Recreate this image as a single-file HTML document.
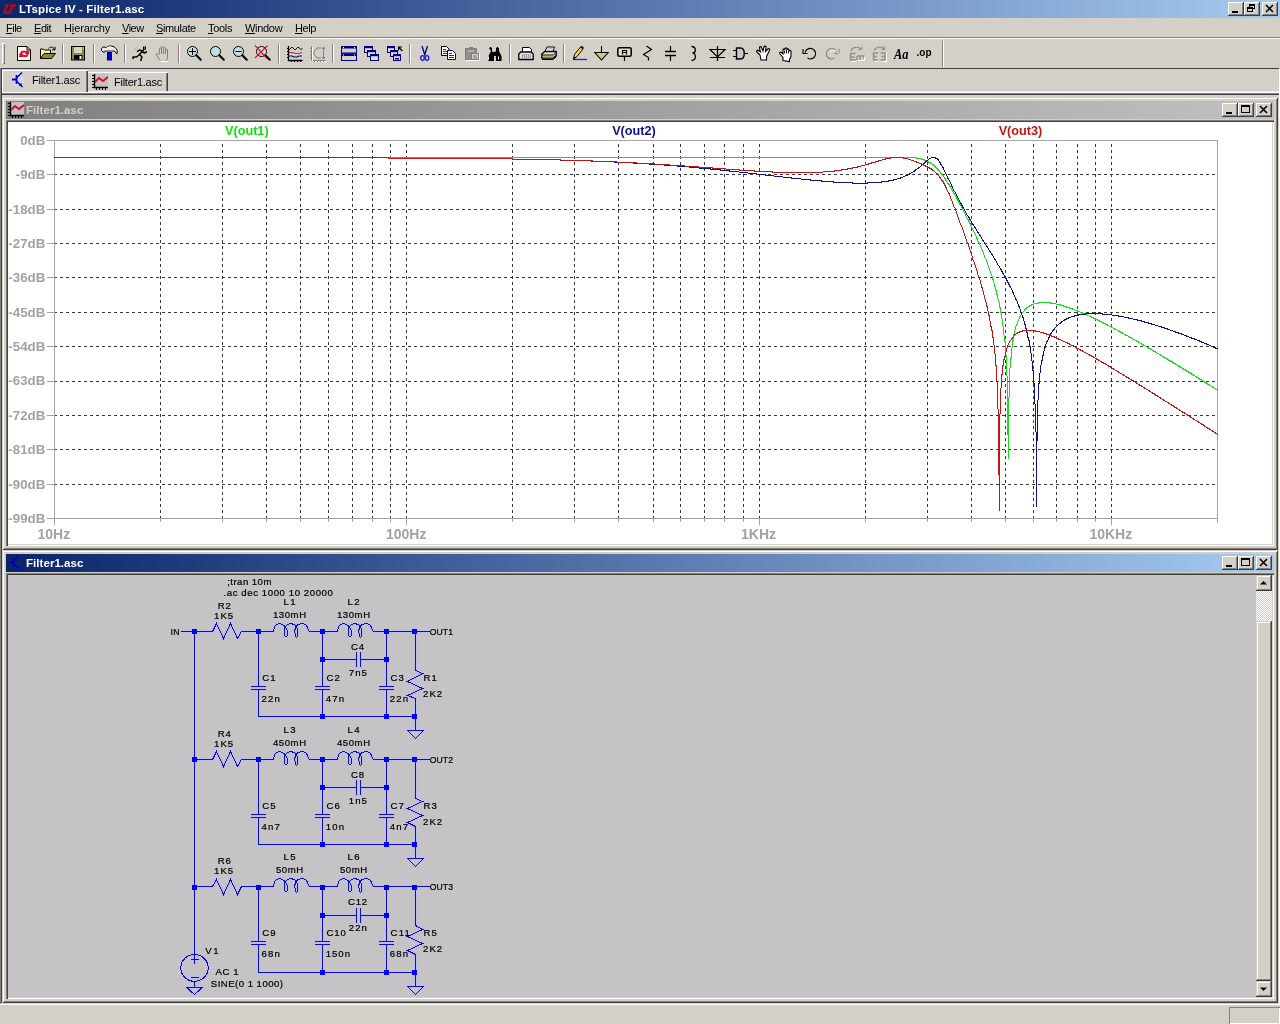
<!DOCTYPE html>
<html lang="en"><head><meta charset="utf-8"><title>LTspice IV - Filter1.asc</title>
<style>
html,body{margin:0;padding:0}
body{width:1280px;height:1024px;position:relative;overflow:hidden;background:#d4d0c8;font-family:"Liberation Sans",sans-serif;font-size:11px;color:#000}
div,span,svg{position:absolute;box-sizing:border-box}
svg,span{will-change:transform}
.hl{background:#fff}.sh{background:#808080}.dk{background:#404040}
#title{left:0;top:0;width:1280px;height:18px;background:linear-gradient(90deg,#0a246a 0%,#a6caf0 100%)}
#title .cap{left:19px;top:2px;color:#fff;font-weight:bold;font-size:11.5px;white-space:nowrap;letter-spacing:.1px;line-height:14px}
.btn{width:16px;height:14px;background:#d4d0c8;box-shadow:inset -1px -1px 0 #404040,inset 1px 1px 0 #fff,inset -2px -2px 0 #808080}
.btn svg{left:0;top:0}
#menu{left:0;top:18px;width:1280px;height:19px}
#menu span{top:4px;white-space:nowrap;line-height:13px;font-size:11px}
#menu u{text-decoration:underline;text-underline-offset:1px}
#tool{left:0;top:39px;width:1280px;height:29px}
.grip{left:2px;top:4px;width:3px;height:21px;box-shadow:inset 1px 1px 0 #fff,inset -1px -1px 0 #808080}
.sep{top:5px;width:2px;height:19px;border-left:1px solid #808080;border-right:1px solid #fff}
.ic{top:7px;width:16px;height:16px;overflow:visible}
#tabs{left:0;top:69px;width:1280px;height:24px}
.tab{white-space:nowrap;font-size:11px;line-height:13px}
.child{left:2px;width:1276px;background:#d4d0c8;box-shadow:inset 1px 1px 0 #d4d0c8,inset -1px -1px 0 #404040,inset 2px 2px 0 #fff,inset -2px -2px 0 #808080}
.ctitle{left:4px;top:4px;width:1268px;height:18px}
.ctitle .cap{left:19.5px;top:2px;font-weight:bold;font-size:11.5px;white-space:nowrap;line-height:14px;letter-spacing:.05px}
.client{left:4px;top:23px;width:1268px;box-shadow:inset 1px 1px 0 #808080,inset 2px 2px 0 #404040,inset -1px -1px 0 #fff,inset -2px -2px 0 #d4d0c8}
.client svg.plot,.client svg.sch{left:2px;top:2px}
.sbtn{width:16px;height:16px;background:#d4d0c8;box-shadow:inset -1px -1px 0 #404040,inset 1px 1px 0 #d4d0c8,inset -2px -2px 0 #808080,inset 2px 2px 0 #fff}
#status{left:0;top:1003px;width:1280px;height:21px}
</style></head><body>
<div id="title"><svg width="16" height="16" viewBox="0 0 16 16" style="left:2px;top:1px"><path d="M3.500 3h3.500l-2.500 7h3.500l-1 3h-6.500zM8 3h6.500l-1 3h-2l-2.500 7h-3l2.500-7h-1.500z" fill="#98102a"/></svg><span class="cap">LTspice IV - Filter1.asc</span>
<div class="btn" style="left:1228px;top:2px"><svg width="16" height="14" viewBox="0 0 16 14"><rect x="4" y="9" width="6" height="2" fill="#000"/></svg></div><div class="btn" style="left:1244px;top:2px"><svg width="16" height="14" viewBox="0 0 16 14"><rect x="5.500" y="2.500" width="5" height="4" fill="none" stroke="#000"/><rect x="5" y="2" width="6" height="2" fill="#000"/><rect x="3.500" y="5.500" width="5" height="4" fill="#d4d0c8" stroke="#000"/><rect x="3" y="5" width="6" height="2" fill="#000"/></svg></div><div class="btn" style="left:1262px;top:2px"><svg width="16" height="14" viewBox="0 0 16 14"><path d="M4 3l7 7M11 3l-7 7" stroke="#000" stroke-width="1.600" fill="none"/></svg></div>
</div>
<div id="menu">
<span style="left:5.5px;letter-spacing:-0.5px"><u>F</u>ile</span>
<span style="left:33.5px;letter-spacing:-0.44px"><u>E</u>dit</span>
<span style="left:63.5px;letter-spacing:-0.1px">H<u>i</u>erarchy</span>
<span style="left:121.7px;letter-spacing:-0.5px"><u>V</u>iew</span>
<span style="left:155.5px;letter-spacing:-0.37px"><u>S</u>imulate</span>
<span style="left:208px;letter-spacing:-0.3px"><u>T</u>ools</span>
<span style="left:245px;letter-spacing:-0.3px"><u>W</u>indow</span>
<span style="left:294.5px;letter-spacing:-0.44px"><u>H</u>elp</span>
</div>
<div class="sh" style="left:0;top:37px;width:1280px;height:1px"></div><div class="hl" style="left:0;top:38px;width:1280px;height:1px"></div>
<div id="tool"><div class="grip"></div>
<div class="sep" style="left:62px"></div>
<div class="sep" style="left:93px"></div>
<div class="sep" style="left:124px"></div>
<div class="sep" style="left:178px"></div>
<div class="sep" style="left:278px"></div>
<div class="sep" style="left:332px"></div>
<div class="sep" style="left:409px"></div>
<div class="sep" style="left:509px"></div>
<div class="sep" style="left:563px"></div>
<svg class="ic" style="left:17px" width="16" height="16" viewBox="0 0 16 16"><path d="M.500 .5h9.500l3.500 3.500v10.500h-13z" fill="#fff" stroke="#000"/><path d="M10 .5v3.500h3.500" fill="none" stroke="#000"/><path d="M4.500 4.800h8.500l-2.500 3.200h-2.800l1-1.300h-3l-2 2.500h-2zM10 11h-8.500l2.500-3.200h2.800l-1 1.300h3l2-2.500h2z" fill="#e01028"/></svg>
<svg class="ic" style="left:40px" width="16" height="16" viewBox="0 0 16 16"><path d="M.500 12.500v-9.500h3l1 1h6v3.500" fill="#f8f0a0" stroke="#000"/><path d="M.500 12.500l3.500-5h11.500l-4 5z" fill="#8c8c28" stroke="#000"/><path d="M8.500 2.500c1.500-2 4.500-2 6 .8M15 .8v3h-3" fill="none" stroke="#000"/></svg>
<svg class="ic" style="left:71px" width="16" height="16" viewBox="0 0 16 16"><rect x=".5" y=".5" width="13" height="13.500" fill="#8c8c30" stroke="#000"/><rect x="3" y="1" width="8" height="6" fill="#d4d4cc"/><rect x="3" y="9" width="8.500" height="4.500" fill="#000"/><rect x="8.500" y="10" width="2" height="3" fill="#fff"/><rect x="12" y="1.500" width="1" height="1" fill="#fff"/></svg>
<svg class="ic" style="left:101px" width="16" height="16" viewBox="0 0 16 16"><path d="M.500 2.500l1.500-1.500h2l1 1c1-1.500 3-2 5-2c3 0 5 2 6.200 4.500v2.800l-1 .2c-.5-2-1.500-2.500-3-2.500h-7.200l-1 1h-2l-1.500-1.500z" fill="#e8e8e8" stroke="#000"/><path d="M5.500 2c2-1 4.500-1 6.500 0" stroke="#fff" stroke-width="1.300" fill="none"/><path d="M3 4.800h8.500" stroke="#a0a0a0" stroke-width="1" fill="none"/><rect x="6.500" y="6.500" width="4" height="7.500" fill="#0000c8" stroke="#000080"/></svg>
<svg class="ic" style="left:132px" width="16" height="16" viewBox="0 0 16 16"><g fill="none" stroke="#000" stroke-width="1.500" stroke-linecap="round" stroke-linejoin="round"><path d="M12 3.500l-5 5.500M10.500 5l-3-1l-2 1.500M10 5.500l2.500 1.500l2-1.200M7 9l-2.500 2h-3.500v1.500M7.500 8.500l2.500 2.500l-1 2.500v1"/></g><rect x="11" y=".5" width="3" height="3" fill="#000"/><rect x="12" y="1.500" width="1" height="1" fill="#fff"/><path d="M3 3l2-1.500M4.500 4.500l1.500-1" stroke="#a0a0a0" stroke-width=".8" fill="none"/></svg>
<svg class="ic" style="left:155px" width="16" height="16" viewBox="0 0 16 16"><path d="M4.500 8v-5a1 1 0 0 1 2 0v-1.500a1 1 0 0 1 2 0v1a1 1 0 0 1 2 0v1.500a1 1 0 0 1 2 0v7c0 3-1.500 4.500-4 4.500c-3 0-4-1.500-5-3.500l-2.500-3.500c.5-1 1.500-1 2.500 0z" fill="#d4d0c8" stroke="#808080"/><path d="M6.500 3v5M8.500 2.500v5.500M10.500 4v4" stroke="#808080" fill="none"/><path d="M5 15.500h8" stroke="#fff"/></svg>
<svg class="ic" style="left:187px" width="16" height="16" viewBox="0 0 16 16"><circle cx="5.500" cy="5.500" r="5" fill="#c0e0e0" stroke="#000" stroke-width="1"/><path d="M9.300 9.300L13.800 13.800" stroke="#000" stroke-width="2" stroke-linecap="round"/><path d="M2 5.500h7M5.500 2v7" stroke="#000" stroke-width="1"/></svg>
<svg class="ic" style="left:210px" width="16" height="16" viewBox="0 0 16 16"><circle cx="5.500" cy="5.500" r="5" fill="#c0e0e0" stroke="#000" stroke-width="1"/><path d="M9.300 9.300L13.800 13.800" stroke="#000" stroke-width="2" stroke-linecap="round"/></svg>
<svg class="ic" style="left:233px" width="16" height="16" viewBox="0 0 16 16"><circle cx="5.500" cy="5.500" r="5" fill="#c0e0e0" stroke="#000" stroke-width="1"/><path d="M9.300 9.300L13.800 13.800" stroke="#000" stroke-width="2" stroke-linecap="round"/><path d="M2.500 5.500h6" stroke="#000" stroke-width="1"/></svg>
<svg class="ic" style="left:256px" width="16" height="16" viewBox="0 0 16 16"><circle cx="5.500" cy="5.500" r="5" fill="#c0e0e0" stroke="#000" stroke-width="1"/><path d="M9.300 9.300L13.800 13.800" stroke="#000" stroke-width="2" stroke-linecap="round"/><path d="M-1 -.500l12 13M11.500 -.500L-1 12" stroke="#e01020" stroke-width="1.200"/></svg>
<svg class="ic" style="left:287px" width="16" height="16" viewBox="0 0 16 16"><path d="M1.500 0v14.500h14" fill="none" stroke="#000" stroke-width="1.300"/><path d="M0 2.500h2M0 5.500h2M0 8.500h2M0 11.500h2M4.500 14v2M7.500 14v2M10.500 14v2M13.500 14v2" stroke="#000"/><path d="M2 4l3-3l3 3l3-3l3 2.500l1.500-1" fill="none" stroke="#000" stroke-width=".9"/><path d="M2 6.500h4l2 1h4l3-1" fill="none" stroke="#e02030" stroke-width="1.100"/><path d="M2 10h3l2 1h3l2-1h3" fill="none" stroke="#000080" stroke-width="1.100"/></svg>
<svg class="ic" style="left:310px" width="16" height="16" viewBox="0 0 16 16"><path d="M1.500 0v14.500h14" fill="none" stroke="#808080"/><path d="M2.500 1v14M3 15.500h13" stroke="#fff"/><path d="M0 2.500h2M0 5.500h2M0 8.500h2M0 11.500h2M4.500 14v2M7.500 14v2M10.500 14v2M13.500 14v2" stroke="#808080"/><path d="M13.500 1v12M12 3l1.500-2l1.500 2M12 11l1.500 2l1.500-2" fill="none" stroke="#808080"/><path d="M11 2h-4l-3 4v2l3 4h4" fill="none" stroke="#808080"/></svg>
<svg class="ic" style="left:341px" width="16" height="16" viewBox="0 0 16 16"><rect x=".5" y=".5" width="15" height="6.500" fill="#d4d0c8" stroke="#000080"/><rect x="0" y="0" width="16" height="2.500" fill="#000080"/><rect x=".5" y="8" width="15" height="6.500" fill="#d4d0c8" stroke="#000080"/><rect x="0" y="7.500" width="16" height="2.500" fill="#000080"/><rect x="2" y="1" width="1" height="1" fill="#fff"/><rect x="13" y="1" width="1" height="1" fill="#fff"/><rect x="2" y="8.500" width="1" height="1" fill="#fff"/><rect x="13" y="8.500" width="1" height="1" fill="#fff"/></svg>
<svg class="ic" style="left:364px" width="16" height="16" viewBox="0 0 16 16"><rect x="0.5" y="0.5" width="8" height="6" fill="#dcdce8" stroke="#000080"/><rect x="0" y="0" width="9" height="2.2" fill="#000080"/><rect x="3.5" y="4.5" width="8" height="6" fill="#dcdce8" stroke="#000080"/><rect x="3" y="4" width="9" height="2.2" fill="#000080"/><rect x="6.5" y="8.5" width="8" height="6" fill="#dcdce8" stroke="#000080"/><rect x="6" y="8" width="9" height="2.2" fill="#000080"/></svg>
<svg class="ic" style="left:387px" width="16" height="16" viewBox="0 0 16 16"><rect x="0.5" y="0.5" width="7" height="6" fill="#dcdce8" stroke="#000080"/><rect x="0" y="0" width="8" height="2.2" fill="#000080"/><rect x="3.5" y="4.5" width="7" height="6" fill="#dcdce8" stroke="#000080"/><rect x="3" y="4" width="8" height="2.2" fill="#000080"/><rect x="6.5" y="8.5" width="7" height="6" fill="#dcdce8" stroke="#000080"/><rect x="6" y="8" width="8" height="2.2" fill="#000080"/><rect x="8" y="12" width="4" height="1.500" fill="#000080"/><path d="M15.500 5l-3.500-3.500M11.500 4.500v-3.500h3.500" fill="none" stroke="#000" stroke-width="1.200"/></svg>
<svg class="ic" style="left:418px" width="16" height="16" viewBox="0 0 16 16"><path d="M4 0l3 9.500M9.500 0l-3 9.500" stroke="#000080" stroke-width="1.300" fill="none"/><ellipse cx="4.500" cy="12" rx="1.800" ry="2.400" fill="none" stroke="#1818d8" stroke-width="1.300"/><ellipse cx="9" cy="12" rx="1.800" ry="2.400" fill="none" stroke="#1818d8" stroke-width="1.300"/></svg>
<svg class="ic" style="left:441px" width="16" height="16" viewBox="0 0 16 16"><path d="M.500 .5h5l2.500 2.500v6.500h-7.500z" fill="#fff" stroke="#000"/><path d="M2 3.500h3M2 5.500h4M2 7.500h4" stroke="#000" stroke-width=".8"/><path d="M6.500 4.500h5l3 3v6h-8z" fill="#fff" stroke="#000080"/><path d="M8 7.500h3M8 9.500h5M8 11.500h5" stroke="#000" stroke-width=".8"/></svg>
<svg class="ic" style="left:464px" width="16" height="16" viewBox="0 0 16 16"><rect x="1.500" y="2.500" width="11" height="11" fill="#909090" stroke="#808080"/><rect x="5" y="1" width="4" height="2.500" fill="#808080"/><path d="M4 5h6" stroke="#d4d0c8"/><rect x="7.500" y="7.500" width="7" height="6" fill="#d4d0c8" stroke="#808080"/><path d="M9 10h4M9 12h4" stroke="#808080"/><path d="M2 14.500h13.500v-7" fill="none" stroke="#fff"/></svg>
<svg class="ic" style="left:486px" width="16" height="16" viewBox="0 0 16 16"><path d="M3 2h3v3l1 1h2l1-1v-3h3v3l2.500 5v5h-5.500v-5h-2v5h-5.500v-5l2.500-5z" fill="#000"/><rect x="3.800" y="1" width="1.500" height="1.500" fill="#000"/><rect x="10.700" y="1" width="1.500" height="1.500" fill="#000"/><path d="M2.500 10.500v3M12.500 10.500v3" stroke="#fff"/></svg>
<svg class="ic" style="left:518px" width="16" height="16" viewBox="0 0 16 16"><path d="M4.500 6v-4.500h7l2 2v2.500" fill="#fff" stroke="#000"/><path d="M.8 13.500v-5.500l2-2h10.400l2 2v5.500z" fill="#e8e8e8" stroke="#000" stroke-width="1.300"/><rect x="3" y="8" width="10" height="4.500" fill="#a0a0a0"/><path d="M3 9h10M3 11h10" stroke="#fff" stroke-dasharray="1 1"/></svg>
<svg class="ic" style="left:541px" width="16" height="16" viewBox="0 0 16 16"><path d="M4 5.500l2-4.500h7.500l-1.500 4.500" fill="#fff" stroke="#000"/><path d="M.8 12v-4l3-2.500h11.400v4l-3 2.500z" fill="#e0e0e0" stroke="#000" stroke-width="1.300"/><path d="M1 9h11.500l2.500-2.500M1 13.500h11l3-2.500v-1.500" fill="none" stroke="#000"/><path d="M2 11h10" stroke="#a0a020" stroke-width="1.500"/><path d="M6.500 3h5" stroke="#909090"/></svg>
<svg class="ic" style="left:572px" width="16" height="16" viewBox="0 0 16 16"><path d="M1 13.500h14" stroke="#2020e0" stroke-width="1.300"/><path d="M1.500 13l1-4.500l6-7.500l2.500 2l-6 7.500z" fill="#f0e020" stroke="#000"/><path d="M8.500 1l2.500 2l1-1.300l-2.500-2z" fill="#000"/><path d="M1.500 13l.6-2.600l1.800 1.400z" fill="#000"/></svg>
<svg class="ic" style="left:595px" width="16" height="16" viewBox="0 0 16 16"><path d="M6.500 0v6.500" stroke="#000" stroke-width="1.100"/><path d="M-.200 6.500h13.400l-6.700 7.500z" fill="#c8c890" stroke="#000" stroke-width="1.100"/></svg>
<svg class="ic" style="left:617px" width="16" height="16" viewBox="0 0 16 16"><rect x=".8" y="1.800" width="13.400" height="8.400" rx="1.500" fill="#e0e0c0" stroke="#000" stroke-width="1.500"/><path d="M7.500 10v5" stroke="#000" stroke-width="1.200"/><path d="M5.500 8.500v-4h4v4M5.500 6.500h4" fill="none" stroke="#000" stroke-width="1.200"/></svg>
<svg class="ic" style="left:641px" width="16" height="16" viewBox="0 0 16 16"><path d="M5.500 0l5 3.500l-8 5l5 3v3" fill="none" stroke="#000" stroke-width="1.200"/></svg>
<svg class="ic" style="left:663px" width="16" height="16" viewBox="0 0 16 16"><path d="M7.500 0v5.500M7.500 9.500v5.500" stroke="#000" stroke-width="1.200"/><path d="M2 5.500h11M2 9.500h11" stroke="#000" stroke-width="1.600"/></svg>
<svg class="ic" style="left:686px" width="16" height="16" viewBox="0 0 16 16"><path d="M5.500 .5c5 0 5 6.500 1 6.500c4 0 4 7.500-1 7.500" fill="none" stroke="#000" stroke-width="1.300"/></svg>
<svg class="ic" style="left:710px" width="16" height="16" viewBox="0 0 16 16"><path d="M7.500 0v15M0 3.500h15l-7.500 7.500zM0 11.500h15" fill="none" stroke="#000" stroke-width="1.200"/></svg>
<svg class="ic" style="left:733px" width="16" height="16" viewBox="0 0 16 16"><path d="M0 4.500h4M0 10.500h4M11 7.500h4" stroke="#000" stroke-width="1.200"/><path d="M3.500 2h4c5 0 5 11 0 11h-4z" fill="#c8c8c8" stroke="#000" stroke-width="1.400"/></svg>
<svg class="ic" style="left:756px" width="16" height="16" viewBox="0 0 16 16"><path d="M4 9l-3-3c-1-1 .5-2.500 1.500-1.500l2 1.500l-1-4c-.3-1.500 1.500-2 2-.5l1.500 3.500l1-4c.4-1.500 2.300-1 2 .5l-.5 4l2.500-2.500c1-1 2.500 0 1.500 1.500l-3 6v3.500h-5.500z" fill="#fff" stroke="#000" stroke-width="1.100"/></svg>
<svg class="ic" style="left:779px" width="16" height="16" viewBox="0 0 16 16"><path d="M4 14.500v-3l-3-3.500c-1-1.500 .5-2.500 1.500-1.500l1.500 1.500v-4c0-1.500 2-1.500 2 0v-1c0-1.500 2-1.500 2 0v1c0-1.500 2-1.500 2 0v1.500c0-1.500 2-1.500 2 0v5l-1.500 3v2z" fill="#fff" stroke="#000" stroke-width="1.100"/><path d="M5.500 4.500v3M7.500 4v3.500M9.500 4.500v3" stroke="#000" stroke-width=".9" fill="none"/></svg>
<svg class="ic" style="left:802px" width="16" height="16" viewBox="0 0 16 16"><path d="M3 6.500c1-4 6-5.500 9-2.500c3 3 1.500 8.500-3 9c-1.500 .2-2.500-.3-3.500-1" fill="none" stroke="#000" stroke-width="1.100"/><path d="M1 3v4.500h4.500" fill="none" stroke="#000" stroke-width="1.100"/></svg>
<svg class="ic" style="left:825px" width="16" height="16" viewBox="0 0 16 16"><path d="M12 6.500c-1-4-6-5.500-9-2.500c-3 3-1.500 8.500 3 9c1.500 .2 2.500-.3 3.500-1" fill="none" stroke="#909090" stroke-width="1.300"/><path d="M14 3v4.500h-4.500" fill="none" stroke="#909090" stroke-width="1.300"/><path d="M13 7.500c-1-4-6-5.500-9-2.500" fill="none" stroke="#fff" stroke-width=".8" transform="translate(1 1)"/></svg>
<svg class="ic" style="left:848px" width="16" height="16" viewBox="0 0 16 16"><path d="M2.500 7v7.500M2.500 7.500h5M2.500 11h4M2.500 14h5.500" fill="none" stroke="#909090" stroke-width="1.500"/><path d="M9 10h7v3M9 10v4M12 10v4" fill="none" stroke="#909090" stroke-width="1.400"/><path d="M3 5c1-4 7-5 10-2M13.500 .5v3h-3" fill="none" stroke="#909090" stroke-width="1.200"/><path d="M3.500 15.500h5M10 14.500h6.500v-4" fill="none" stroke="#fff"/></svg>
<svg class="ic" style="left:871px" width="16" height="16" viewBox="0 0 16 16"><path d="M2.500 6.500v8M2.500 7h4.500M2.500 10.500h3.500M2.500 14h4.500" fill="none" stroke="#909090" stroke-width="1.500"/><path d="M14 6.500v8M14 7h-4.500M14 10.500h-3.500M14 14h-4.500" fill="none" stroke="#909090" stroke-width="1.500"/><path d="M3 4.500c2-4 8-4.500 10-1.500M13.500 .5v3h-3" fill="none" stroke="#909090" stroke-width="1.200"/><path d="M3.500 15.500h4M15.500 7v8.500h-5" fill="none" stroke="#fff"/></svg>
<svg class="ic" style="left:894px" width="16" height="16" viewBox="0 0 16 16"><text x="0" y="13" font-family="Liberation Serif, serif" font-weight="bold" font-style="italic" font-size="14px" fill="#000" textLength="14.500" lengthAdjust="spacingAndGlyphs">Aa</text></svg>
<svg class="ic" style="left:917px" width="16" height="16" viewBox="0 0 16 16"><text x="-.5" y="10" font-family="Liberation Sans, sans-serif" font-weight="bold" font-size="11.500px" fill="#000" textLength="15" lengthAdjust="spacingAndGlyphs">.op</text></svg>
<div class="sep" style="left:942px;top:2px;height:26px"></div>
</div>
<div class="dk" style="left:0;top:68px;width:1279px;height:1px"></div>
<div id="tabs">
<div style="left:2px;top:1px;width:86px;height:23px;box-shadow:inset 1px 1px 0 #fff,inset -1px 0 0 #404040,inset -2px 0 0 #808080"></div>
<svg width="16" height="16" viewBox="0 0 16 16" style="left:11px;top:3px"><ellipse cx="7" cy="8" rx="6" ry="7" fill="#d8d8f8" opacity=".8"/><path d="M1 7.500h4M5.500 3v9" stroke="#0000d0" stroke-width="1.800" fill="none"/><path d="M5.500 6l5.500-5.500M5.500 9l6 6" stroke="#0000d0" stroke-width="1.300" fill="none"/><path d="M7.500 13.500l3.500 .8l-.8-3.500z" fill="#0000d0"/></svg>
<span class="tab" style="left:32px;top:5px;letter-spacing:-.25px">Filter1.asc</span>
<div style="left:88px;top:3px;width:80px;height:20px;box-shadow:inset 0 1px 0 #fff,inset -1px 0 0 #404040,inset -2px 0 0 #808080"></div>
<svg width="16" height="16" viewBox="0 0 16 16" style="left:92px;top:5px"><rect x="3" y="0" width="13" height="13" fill="#c0c4c0"/><path d="M2.500 0v13.500h13.500" fill="none" stroke="#000" stroke-width="1.400"/><path d="M0 1.500h2M0 4.500h2M0 7.500h2M0 10.500h2M0 13.500h2M4.500 14v2M7.500 14v2M10.500 14v2M13.500 14v2" stroke="#000" stroke-width="1.200"/><path d="M3 8l4-4l4 3l5-4" fill="none" stroke="#e00828" stroke-width="1.800"/></svg>
<span class="tab" style="left:114px;top:7px;letter-spacing:-.25px">Filter1.asc</span>
<div style="left:88px;top:22px;width:1191px;height:1px;background:#eceae6"></div><div class="hl" style="left:2px;top:23px;width:1277px;height:1px"></div>
</div>
<div class="sh" style="left:0;top:93px;width:1280px;height:1px"></div><div class="dk" style="left:1px;top:94px;width:1278px;height:1px"></div>
<div class="sh" style="left:0;top:68px;width:1px;height:936px"></div><div class="dk" style="left:1px;top:69px;width:1px;height:934px"></div>
<div class="hl" style="left:1279px;top:69px;width:1px;height:935px"></div>
<div class="child" style="top:97px;height:453px">
<div class="ctitle" style="background:linear-gradient(90deg,#808080,#c0c0c0)"><svg width="16" height="16" viewBox="0 0 16 16" style="left:2px;top:1px"><rect x="3" y="0" width="13" height="13" fill="#c0c4c0"/><path d="M2.500 0v13.500h13.500" fill="none" stroke="#000" stroke-width="1.400"/><path d="M0 1.500h2M0 4.500h2M0 7.500h2M0 10.500h2M0 13.500h2M4.500 14v2M7.500 14v2M10.500 14v2M13.500 14v2" stroke="#000" stroke-width="1.200"/><path d="M3 8l4-4l4 3l5-4" fill="none" stroke="#e00828" stroke-width="1.800"/></svg><span class="cap" style="color:#d4d0c8">Filter1.asc</span>
<div class="btn" style="left:1216px;top:2px"><svg width="16" height="14" viewBox="0 0 16 14"><rect x="4" y="9" width="6" height="2" fill="#000"/></svg></div><div class="btn" style="left:1232px;top:2px"><svg width="16" height="14" viewBox="0 0 16 14"><rect x="3.5" y="2.500" width="8" height="7" fill="none" stroke="#000"/><rect x="3" y="2" width="9" height="2" fill="#000"/></svg></div><div class="btn" style="left:1250px;top:2px"><svg width="16" height="14" viewBox="0 0 16 14"><path d="M4 3l7 7M11 3l-7 7" stroke="#000" stroke-width="1.600" fill="none"/></svg></div>
</div>
<div class="client" style="height:426px;background:#fff">
<svg class="plot" width="1265" height="423" viewBox="8 122 1265 423">
<g stroke="#383838" stroke-width="1" stroke-dasharray="3 3" shape-rendering="crispEdges" fill="none">
<line x1="160.5" y1="141" x2="160.5" y2="518" stroke-dashoffset="3"/>
<line x1="222.5" y1="141" x2="222.5" y2="518" stroke-dashoffset="3"/>
<line x1="266.5" y1="141" x2="266.5" y2="518" stroke-dashoffset="3"/>
<line x1="300.5" y1="141" x2="300.5" y2="518" stroke-dashoffset="3"/>
<line x1="328.5" y1="141" x2="328.5" y2="518" stroke-dashoffset="3"/>
<line x1="352.5" y1="141" x2="352.5" y2="518" stroke-dashoffset="3"/>
<line x1="372.5" y1="141" x2="372.5" y2="518" stroke-dashoffset="3"/>
<line x1="390.5" y1="141" x2="390.5" y2="518" stroke-dashoffset="3"/>
<line x1="406.5" y1="141" x2="406.5" y2="518" stroke-dashoffset="3"/>
<line x1="512.5" y1="141" x2="512.5" y2="518" stroke-dashoffset="3"/>
<line x1="574.5" y1="141" x2="574.5" y2="518" stroke-dashoffset="3"/>
<line x1="618.5" y1="141" x2="618.5" y2="518" stroke-dashoffset="3"/>
<line x1="653.5" y1="141" x2="653.5" y2="518" stroke-dashoffset="3"/>
<line x1="680.5" y1="141" x2="680.5" y2="518" stroke-dashoffset="3"/>
<line x1="704.5" y1="141" x2="704.5" y2="518" stroke-dashoffset="3"/>
<line x1="724.5" y1="141" x2="724.5" y2="518" stroke-dashoffset="3"/>
<line x1="743.5" y1="141" x2="743.5" y2="518" stroke-dashoffset="3"/>
<line x1="759.5" y1="141" x2="759.5" y2="518" stroke-dashoffset="3"/>
<line x1="865.5" y1="141" x2="865.5" y2="518" stroke-dashoffset="3"/>
<line x1="927.5" y1="141" x2="927.5" y2="518" stroke-dashoffset="3"/>
<line x1="971.5" y1="141" x2="971.5" y2="518" stroke-dashoffset="3"/>
<line x1="1005.5" y1="141" x2="1005.5" y2="518" stroke-dashoffset="3"/>
<line x1="1033.5" y1="141" x2="1033.5" y2="518" stroke-dashoffset="3"/>
<line x1="1056.5" y1="141" x2="1056.5" y2="518" stroke-dashoffset="3"/>
<line x1="1077.5" y1="141" x2="1077.5" y2="518" stroke-dashoffset="3"/>
<line x1="1095.5" y1="141" x2="1095.5" y2="518" stroke-dashoffset="3"/>
<line x1="1111.5" y1="141" x2="1111.5" y2="518" stroke-dashoffset="3"/>
<line x1="55" y1="174.5" x2="1217" y2="174.5" stroke-dashoffset="1"/>
<line x1="55" y1="209.5" x2="1217" y2="209.5" stroke-dashoffset="1"/>
<line x1="55" y1="243.5" x2="1217" y2="243.5" stroke-dashoffset="1"/>
<line x1="55" y1="277.5" x2="1217" y2="277.5" stroke-dashoffset="1"/>
<line x1="55" y1="312.5" x2="1217" y2="312.5" stroke-dashoffset="1"/>
<line x1="55" y1="346.5" x2="1217" y2="346.5" stroke-dashoffset="1"/>
<line x1="55" y1="381.5" x2="1217" y2="381.5" stroke-dashoffset="1"/>
<line x1="55" y1="415.5" x2="1217" y2="415.5" stroke-dashoffset="1"/>
<line x1="55" y1="449.5" x2="1217" y2="449.5" stroke-dashoffset="1"/>
<line x1="55" y1="484.5" x2="1217" y2="484.5" stroke-dashoffset="1"/>
</g>
<g stroke="#a4a4a4" stroke-width="1" shape-rendering="crispEdges" fill="none">
<rect x="54.5" y="140.5" width="1163.0" height="378.0"/>
<line x1="47" y1="140.5" x2="54" y2="140.5"/>
<line x1="47" y1="174.5" x2="54" y2="174.5"/>
<line x1="47" y1="209.5" x2="54" y2="209.5"/>
<line x1="47" y1="243.5" x2="54" y2="243.5"/>
<line x1="47" y1="277.5" x2="54" y2="277.5"/>
<line x1="47" y1="312.5" x2="54" y2="312.5"/>
<line x1="47" y1="346.5" x2="54" y2="346.5"/>
<line x1="47" y1="381.5" x2="54" y2="381.5"/>
<line x1="47" y1="415.5" x2="54" y2="415.5"/>
<line x1="47" y1="449.5" x2="54" y2="449.5"/>
<line x1="47" y1="484.5" x2="54" y2="484.5"/>
<line x1="47" y1="518.5" x2="54" y2="518.5"/>
<line x1="54.5" y1="519" x2="54.5" y2="525"/>
<line x1="160.5" y1="519" x2="160.5" y2="522"/>
<line x1="222.5" y1="519" x2="222.5" y2="522"/>
<line x1="266.5" y1="519" x2="266.5" y2="522"/>
<line x1="300.5" y1="519" x2="300.5" y2="522"/>
<line x1="328.5" y1="519" x2="328.5" y2="522"/>
<line x1="352.5" y1="519" x2="352.5" y2="522"/>
<line x1="372.5" y1="519" x2="372.5" y2="522"/>
<line x1="390.5" y1="519" x2="390.5" y2="522"/>
<line x1="406.5" y1="519" x2="406.5" y2="525"/>
<line x1="512.5" y1="519" x2="512.5" y2="522"/>
<line x1="574.5" y1="519" x2="574.5" y2="522"/>
<line x1="618.5" y1="519" x2="618.5" y2="522"/>
<line x1="653.5" y1="519" x2="653.5" y2="522"/>
<line x1="680.5" y1="519" x2="680.5" y2="522"/>
<line x1="704.5" y1="519" x2="704.5" y2="522"/>
<line x1="724.5" y1="519" x2="724.5" y2="522"/>
<line x1="743.5" y1="519" x2="743.5" y2="522"/>
<line x1="759.5" y1="519" x2="759.5" y2="525"/>
<line x1="865.5" y1="519" x2="865.5" y2="522"/>
<line x1="927.5" y1="519" x2="927.5" y2="522"/>
<line x1="971.5" y1="519" x2="971.5" y2="522"/>
<line x1="1005.5" y1="519" x2="1005.5" y2="522"/>
<line x1="1033.5" y1="519" x2="1033.5" y2="522"/>
<line x1="1056.5" y1="519" x2="1056.5" y2="522"/>
<line x1="1077.5" y1="519" x2="1077.5" y2="522"/>
<line x1="1095.5" y1="519" x2="1095.5" y2="522"/>
<line x1="1111.5" y1="519" x2="1111.5" y2="525"/>
<line x1="1217.5" y1="519" x2="1217.5" y2="523"/>
</g>
<polyline points="54.5,157.5 916.5,157.5 916.5,158.5 921.5,158.5 921.5,159.5 924.5,159.5 924.5,160.5 926.5,160.5 927.5,161.5 928.5,161.5 928.5,162.5 930.5,162.5 930.5,163.5 931.5,163.5 932.5,164.5 933.5,164.5 933.5,165.5 934.5,165.5 934.5,166.5 935.5,166.5 935.5,167.5 936.5,167.5 936.5,168.5 937.5,168.5 937.5,169.5 938.5,169.5 938.5,170.5 939.5,170.5 939.5,171.5 940.5,172.5 940.5,173.5 941.5,173.5 941.5,174.5 942.5,174.5 942.5,175.5 943.5,175.5 943.5,176.5 944.5,177.5 944.5,178.5 945.5,178.5 945.5,180.5 946.5,180.5 946.5,181.5 947.5,182.5 947.5,183.5 948.5,183.5 948.5,184.5 949.5,184.5 949.5,186.5 950.5,186.5 950.5,187.5 951.5,188.5 951.5,189.5 952.5,190.5 952.5,191.5 953.5,192.5 953.5,193.5 954.5,193.5 954.5,194.5 955.5,195.5 955.5,196.5 956.5,196.5 956.5,198.5 957.5,198.5 957.5,200.5 958.5,200.5 958.5,202.5 959.5,202.5 959.5,204.5 960.5,204.5 960.5,205.5 961.5,206.5 961.5,207.5 962.5,208.5 962.5,209.5 963.5,210.5 963.5,211.5 964.5,212.5 964.5,213.5 965.5,214.5 965.5,215.5 966.5,216.5 966.5,217.5 967.5,218.5 967.5,219.5 968.5,219.5 968.5,221.5 969.5,221.5 969.5,223.5 970.5,223.5 970.5,225.5 971.5,226.5 971.5,227.5 972.5,228.5 972.5,229.5 973.5,230.5 973.5,231.5 974.5,232.5 974.5,233.5 975.5,234.5 975.5,235.5 976.5,236.5 976.5,238.5 977.5,238.5 977.5,240.5 978.5,241.5 978.5,242.5 979.5,243.5 979.5,244.5 980.5,245.5 980.5,246.5 981.5,247.5 981.5,249.5 982.5,250.5 982.5,251.5 983.5,252.5 983.5,254.5 984.5,255.5 984.5,257.5 985.5,258.5 986.5,259.5 986.5,261.5 987.5,262.5 987.5,264.5 988.5,265.5 988.5,267.5 989.5,268.5 989.5,270.5 990.5,271.5 990.5,273.5 991.5,274.5 991.5,275.5 992.5,276.5 992.5,278.5 993.5,280.5 993.5,282.5 994.5,283.5 994.5,286.5 995.5,287.5 995.5,289.5 996.5,291.5 996.5,293.5 997.5,295.5 997.5,298.5 998.5,299.5 998.5,301.5 999.5,302.5 999.5,306.5 1000.5,308.5 1000.5,311.5 1001.5,313.5 1001.5,317.5 1002.5,320.5 1002.5,324.5 1003.5,327.5 1003.5,333.5 1004.5,336.5 1004.5,339.5 1005.5,343.5 1005.5,352.5 1006.5,357.5 1006.5,370.5 1007.5,380.5 1007.5,411.5 1008.5,458.5 1008.5,404.5 1009.5,389.5 1009.5,371.5 1010.5,365.5 1010.5,360.5 1011.5,356.5 1011.5,349.5 1012.5,346.5 1012.5,341.5 1013.5,339.5 1013.5,335.5 1014.5,333.5 1014.5,330.5 1015.5,329.5 1015.5,326.5 1016.5,325.5 1016.5,324.5 1017.5,323.5 1017.5,321.5 1018.5,320.5 1018.5,319.5 1019.5,318.5 1019.5,316.5 1020.5,316.5 1020.5,315.5 1021.5,314.5 1021.5,313.5 1022.5,312.5 1023.5,311.5 1024.5,310.5 1024.5,309.5 1025.5,309.5 1025.5,308.5 1026.5,308.5 1026.5,307.5 1027.5,307.5 1028.5,306.5 1029.5,306.5 1029.5,305.5 1031.5,305.5 1031.5,304.5 1033.5,304.5 1034.5,303.5 1038.5,303.5 1038.5,302.5 1050.5,302.5 1050.5,303.5 1055.5,303.5 1056.5,304.5 1060.5,304.5 1060.5,305.5 1063.5,305.5 1063.5,306.5 1066.5,306.5 1066.5,307.5 1069.5,307.5 1069.5,308.5 1072.5,308.5 1072.5,309.5 1074.5,309.5 1075.5,310.5 1077.5,310.5 1077.5,311.5 1079.5,311.5 1080.5,312.5 1082.5,312.5 1082.5,313.5 1084.5,313.5 1084.5,314.5 1086.5,314.5 1087.5,315.5 1088.5,315.5 1089.5,316.5 1091.5,316.5 1091.5,317.5 1093.5,317.5 1093.5,318.5 1095.5,318.5 1095.5,319.5 1097.5,319.5 1097.5,320.5 1099.5,320.5 1099.5,321.5 1101.5,321.5 1101.5,322.5 1103.5,322.5 1103.5,323.5 1105.5,323.5 1105.5,324.5 1107.5,324.5 1107.5,325.5 1108.5,325.5 1109.5,326.5 1111.5,326.5 1111.5,327.5 1112.5,327.5 1113.5,328.5 1114.5,328.5 1114.5,329.5 1116.5,329.5 1117.5,330.5 1118.5,330.5 1118.5,331.5 1120.5,331.5 1120.5,332.5 1122.5,332.5 1122.5,333.5 1123.5,333.5 1124.5,334.5 1125.5,334.5 1125.5,335.5 1127.5,335.5 1128.5,336.5 1129.5,336.5 1129.5,337.5 1131.5,337.5 1131.5,338.5 1132.5,338.5 1133.5,339.5 1134.5,339.5 1135.5,340.5 1136.5,340.5 1136.5,341.5 1138.5,341.5 1138.5,342.5 1139.5,342.5 1140.5,343.5 1141.5,343.5 1141.5,344.5 1143.5,344.5 1143.5,345.5 1144.5,345.5 1145.5,346.5 1146.5,346.5 1147.5,347.5 1148.5,347.5 1148.5,348.5 1150.5,348.5 1150.5,349.5 1151.5,349.5 1152.5,350.5 1153.5,350.5 1153.5,351.5 1155.5,351.5 1155.5,352.5 1156.5,352.5 1157.5,353.5 1158.5,353.5 1159.5,354.5 1160.5,354.5 1160.5,355.5 1161.5,355.5 1162.5,356.5 1163.5,356.5 1163.5,357.5 1165.5,357.5 1165.5,358.5 1167.5,358.5 1167.5,359.5 1168.5,359.5 1168.5,360.5 1170.5,360.5 1170.5,361.5 1172.5,361.5 1172.5,362.5 1173.5,362.5 1173.5,363.5 1175.5,363.5 1175.5,364.5 1176.5,364.5 1177.5,365.5 1178.5,365.5 1178.5,366.5 1180.5,366.5 1180.5,367.5 1181.5,367.5 1182.5,368.5 1183.5,368.5 1183.5,369.5 1185.5,369.5 1185.5,370.5 1186.5,370.5 1186.5,371.5 1188.5,371.5 1188.5,372.5 1190.5,372.5 1190.5,373.5 1191.5,373.5 1191.5,374.5 1193.5,374.5 1193.5,375.5 1194.5,375.5 1195.5,376.5 1196.5,376.5 1196.5,377.5 1198.5,377.5 1198.5,378.5 1199.5,378.5 1199.5,379.5 1201.5,379.5 1201.5,380.5 1202.5,380.5 1203.5,381.5 1204.5,381.5 1204.5,382.5 1206.5,382.5 1206.5,383.5 1207.5,383.5 1207.5,384.5 1209.5,384.5 1209.5,385.5 1210.5,385.5 1211.5,386.5 1212.5,386.5 1212.5,387.5 1213.5,387.5 1214.5,388.5 1215.5,388.5 1216.5,389.5 1217.5,389.5 1217.5,390.5" fill="none" stroke="#18dc18" stroke-width="1" shape-rendering="crispEdges" stroke-linecap="square"/>
<polyline points="54.5,157.5 388.5,157.5 389.5,158.5 512.5,158.5 512.5,159.5 559.5,159.5 560.5,160.5 590.5,160.5 591.5,161.5 613.5,161.5 614.5,162.5 633.5,162.5 633.5,163.5 649.5,163.5 649.5,164.5 663.5,164.5 664.5,165.5 676.5,165.5 677.5,166.5 688.5,166.5 689.5,167.5 699.5,167.5 699.5,168.5 710.5,168.5 710.5,169.5 720.5,169.5 720.5,170.5 729.5,170.5 729.5,171.5 738.5,171.5 739.5,172.5 747.5,172.5 748.5,173.5 756.5,173.5 757.5,174.5 765.5,174.5 765.5,175.5 773.5,175.5 774.5,176.5 782.5,176.5 783.5,177.5 791.5,177.5 791.5,178.5 800.5,178.5 801.5,179.5 810.5,179.5 810.5,180.5 821.5,180.5 821.5,181.5 833.5,181.5 833.5,182.5 852.5,182.5 852.5,183.5 867.5,183.5 867.5,182.5 881.5,182.5 881.5,181.5 888.5,181.5 888.5,180.5 893.5,180.5 893.5,179.5 896.5,179.5 897.5,178.5 900.5,178.5 900.5,177.5 902.5,177.5 903.5,176.5 904.5,176.5 905.5,175.5 907.5,175.5 907.5,174.5 909.5,174.5 909.5,173.5 910.5,173.5 911.5,172.5 912.5,172.5 913.5,171.5 914.5,171.5 914.5,170.5 915.5,170.5 915.5,169.5 916.5,169.5 917.5,168.5 918.5,168.5 918.5,167.5 919.5,167.5 920.5,166.5 921.5,165.5 922.5,164.5 923.5,163.5 924.5,163.5 924.5,162.5 925.5,162.5 925.5,161.5 926.5,161.5 926.5,160.5 927.5,160.5 928.5,159.5 929.5,158.5 930.5,158.5 931.5,157.5 935.5,157.5 935.5,158.5 937.5,158.5 937.5,159.5 938.5,159.5 938.5,160.5 939.5,161.5 939.5,162.5 940.5,162.5 940.5,164.5 941.5,164.5 941.5,165.5 942.5,166.5 942.5,167.5 943.5,167.5 943.5,169.5 944.5,170.5 944.5,171.5 945.5,172.5 945.5,173.5 946.5,174.5 946.5,175.5 947.5,176.5 947.5,178.5 948.5,178.5 948.5,179.5 949.5,180.5 949.5,181.5 950.5,182.5 950.5,183.5 951.5,184.5 951.5,186.5 952.5,186.5 952.5,188.5 953.5,189.5 953.5,190.5 954.5,191.5 955.5,192.5 955.5,193.5 956.5,194.5 956.5,195.5 957.5,196.5 957.5,197.5 958.5,198.5 958.5,199.5 959.5,200.5 959.5,201.5 960.5,202.5 960.5,203.5 961.5,203.5 961.5,205.5 962.5,205.5 962.5,207.5 963.5,207.5 963.5,208.5 964.5,209.5 964.5,210.5 965.5,211.5 965.5,212.5 966.5,213.5 966.5,214.5 967.5,215.5 968.5,216.5 968.5,217.5 969.5,217.5 969.5,219.5 970.5,219.5 970.5,220.5 971.5,221.5 971.5,222.5 972.5,223.5 972.5,224.5 973.5,224.5 973.5,225.5 974.5,226.5 974.5,227.5 975.5,227.5 975.5,228.5 976.5,229.5 976.5,230.5 977.5,231.5 977.5,232.5 978.5,232.5 978.5,233.5 979.5,234.5 979.5,235.5 980.5,235.5 980.5,236.5 981.5,237.5 981.5,238.5 982.5,239.5 982.5,240.5 983.5,240.5 983.5,241.5 984.5,242.5 984.5,243.5 985.5,244.5 986.5,245.5 986.5,246.5 987.5,246.5 987.5,247.5 988.5,248.5 988.5,249.5 989.5,250.5 989.5,251.5 990.5,251.5 990.5,252.5 991.5,253.5 991.5,254.5 992.5,254.5 992.5,255.5 993.5,256.5 993.5,257.5 994.5,258.5 994.5,259.5 995.5,259.5 995.5,260.5 996.5,261.5 996.5,262.5 997.5,263.5 997.5,264.5 998.5,265.5 999.5,266.5 999.5,267.5 1000.5,268.5 1000.5,269.5 1001.5,269.5 1001.5,271.5 1002.5,271.5 1002.5,273.5 1003.5,273.5 1003.5,274.5 1004.5,275.5 1004.5,276.5 1005.5,276.5 1005.5,278.5 1006.5,278.5 1006.5,280.5 1007.5,280.5 1007.5,282.5 1008.5,282.5 1008.5,284.5 1009.5,284.5 1009.5,286.5 1010.5,286.5 1010.5,287.5 1011.5,288.5 1011.5,289.5 1012.5,290.5 1012.5,292.5 1013.5,292.5 1013.5,294.5 1014.5,295.5 1014.5,296.5 1015.5,297.5 1015.5,299.5 1016.5,299.5 1016.5,300.5 1017.5,301.5 1017.5,303.5 1018.5,304.5 1018.5,306.5 1019.5,306.5 1019.5,308.5 1020.5,309.5 1020.5,311.5 1021.5,312.5 1021.5,314.5 1022.5,315.5 1022.5,316.5 1023.5,318.5 1023.5,320.5 1024.5,321.5 1024.5,323.5 1025.5,325.5 1025.5,327.5 1026.5,329.5 1026.5,331.5 1027.5,333.5 1027.5,336.5 1028.5,338.5 1028.5,339.5 1029.5,341.5 1029.5,345.5 1030.5,347.5 1030.5,351.5 1031.5,354.5 1031.5,359.5 1032.5,362.5 1032.5,368.5 1033.5,372.5 1033.5,380.5 1034.5,386.5 1034.5,399.5 1035.5,408.5 1035.5,421.5 1036.5,442.5 1036.5,506.5 1036.5,454.5 1037.5,428.5 1037.5,404.5 1038.5,396.5 1038.5,385.5 1039.5,381.5 1039.5,374.5 1040.5,371.5 1040.5,366.5 1041.5,363.5 1041.5,361.5 1042.5,359.5 1042.5,356.5 1043.5,354.5 1043.5,351.5 1044.5,350.5 1044.5,348.5 1045.5,346.5 1045.5,344.5 1046.5,343.5 1046.5,341.5 1047.5,341.5 1047.5,340.5 1048.5,339.5 1048.5,337.5 1049.5,337.5 1049.5,335.5 1050.5,335.5 1050.5,333.5 1051.5,333.5 1051.5,332.5 1052.5,331.5 1052.5,330.5 1053.5,330.5 1053.5,329.5 1054.5,329.5 1054.5,328.5 1055.5,327.5 1056.5,326.5 1057.5,325.5 1058.5,324.5 1059.5,323.5 1060.5,323.5 1060.5,322.5 1061.5,322.5 1061.5,321.5 1062.5,321.5 1063.5,320.5 1064.5,320.5 1064.5,319.5 1066.5,319.5 1066.5,318.5 1068.5,318.5 1068.5,317.5 1070.5,317.5 1071.5,316.5 1074.5,316.5 1074.5,315.5 1078.5,315.5 1078.5,314.5 1085.5,314.5 1085.5,313.5 1102.5,313.5 1102.5,314.5 1111.5,314.5 1112.5,315.5 1118.5,315.5 1118.5,316.5 1123.5,316.5 1124.5,317.5 1128.5,317.5 1128.5,318.5 1132.5,318.5 1133.5,319.5 1137.5,319.5 1137.5,320.5 1141.5,320.5 1141.5,321.5 1144.5,321.5 1144.5,322.5 1148.5,322.5 1148.5,323.5 1151.5,323.5 1151.5,324.5 1154.5,324.5 1155.5,325.5 1157.5,325.5 1158.5,326.5 1161.5,326.5 1161.5,327.5 1164.5,327.5 1164.5,328.5 1167.5,328.5 1167.5,329.5 1169.5,329.5 1170.5,330.5 1172.5,330.5 1173.5,331.5 1175.5,331.5 1175.5,332.5 1178.5,332.5 1178.5,333.5 1181.5,333.5 1181.5,334.5 1183.5,334.5 1184.5,335.5 1186.5,335.5 1186.5,336.5 1188.5,336.5 1189.5,337.5 1191.5,337.5 1191.5,338.5 1194.5,338.5 1194.5,339.5 1196.5,339.5 1197.5,340.5 1199.5,340.5 1199.5,341.5 1201.5,341.5 1201.5,342.5 1203.5,342.5 1204.5,343.5 1206.5,343.5 1206.5,344.5 1208.5,344.5 1209.5,345.5 1210.5,345.5 1211.5,346.5 1213.5,346.5 1213.5,347.5 1215.5,347.5 1215.5,348.5 1217.5,348.5" fill="none" stroke="#10108c" stroke-width="1" shape-rendering="crispEdges" stroke-linecap="square"/>
<polyline points="54.5,157.5 388.5,157.5 388.5,158.5 512.5,158.5 512.5,159.5 560.5,159.5 561.5,160.5 592.5,160.5 592.5,161.5 616.5,161.5 617.5,162.5 636.5,162.5 637.5,163.5 654.5,163.5 654.5,164.5 669.5,164.5 670.5,165.5 684.5,165.5 685.5,166.5 698.5,166.5 698.5,167.5 712.5,167.5 712.5,168.5 725.5,168.5 726.5,169.5 739.5,169.5 739.5,170.5 754.5,170.5 754.5,171.5 772.5,171.5 772.5,172.5 822.5,172.5 823.5,171.5 834.5,171.5 834.5,170.5 841.5,170.5 841.5,169.5 847.5,169.5 847.5,168.5 852.5,168.5 852.5,167.5 857.5,167.5 857.5,166.5 860.5,166.5 861.5,165.5 864.5,165.5 865.5,164.5 868.5,164.5 868.5,163.5 871.5,163.5 871.5,162.5 875.5,162.5 875.5,161.5 878.5,161.5 878.5,160.5 881.5,160.5 882.5,159.5 885.5,159.5 885.5,158.5 890.5,158.5 890.5,157.5 903.5,157.5 903.5,158.5 907.5,158.5 908.5,159.5 910.5,159.5 911.5,160.5 913.5,160.5 914.5,161.5 916.5,161.5 916.5,162.5 918.5,162.5 919.5,163.5 921.5,163.5 921.5,164.5 923.5,164.5 923.5,165.5 925.5,165.5 925.5,166.5 927.5,166.5 927.5,167.5 929.5,167.5 929.5,168.5 931.5,168.5 931.5,169.5 932.5,169.5 932.5,170.5 933.5,170.5 934.5,171.5 935.5,172.5 936.5,173.5 937.5,173.5 937.5,174.5 938.5,174.5 938.5,175.5 939.5,176.5 939.5,177.5 940.5,177.5 940.5,178.5 941.5,179.5 941.5,180.5 942.5,180.5 942.5,181.5 943.5,181.5 943.5,183.5 944.5,183.5 944.5,185.5 945.5,185.5 945.5,187.5 946.5,187.5 946.5,189.5 947.5,190.5 947.5,191.5 948.5,192.5 948.5,193.5 949.5,193.5 949.5,195.5 950.5,196.5 950.5,198.5 951.5,199.5 951.5,200.5 952.5,201.5 952.5,203.5 953.5,204.5 953.5,206.5 954.5,207.5 955.5,208.5 955.5,210.5 956.5,211.5 956.5,213.5 957.5,214.5 957.5,216.5 958.5,217.5 958.5,219.5 959.5,220.5 959.5,222.5 960.5,223.5 960.5,224.5 961.5,225.5 961.5,226.5 962.5,227.5 962.5,229.5 963.5,230.5 963.5,232.5 964.5,233.5 964.5,235.5 965.5,236.5 965.5,238.5 966.5,239.5 966.5,241.5 967.5,242.5 967.5,243.5 968.5,244.5 968.5,246.5 969.5,247.5 969.5,249.5 970.5,250.5 970.5,252.5 971.5,253.5 971.5,255.5 972.5,256.5 972.5,259.5 973.5,260.5 973.5,261.5 974.5,262.5 974.5,264.5 975.5,265.5 975.5,267.5 976.5,268.5 976.5,270.5 977.5,271.5 977.5,274.5 978.5,275.5 978.5,277.5 979.5,278.5 979.5,279.5 980.5,280.5 980.5,283.5 981.5,284.5 981.5,286.5 982.5,288.5 982.5,290.5 983.5,291.5 983.5,294.5 984.5,295.5 984.5,298.5 985.5,299.5 985.5,301.5 986.5,302.5 986.5,305.5 987.5,307.5 987.5,310.5 988.5,311.5 988.5,314.5 989.5,316.5 989.5,320.5 990.5,321.5 990.5,325.5 991.5,327.5 991.5,329.5 992.5,331.5 992.5,336.5 993.5,338.5 993.5,343.5 994.5,346.5 994.5,352.5 995.5,355.5 995.5,363.5 996.5,367.5 996.5,378.5 997.5,384.5 997.5,401.5 998.5,415.5 998.5,436.5 999.5,510.5 999.5,421.5 1000.5,407.5 1000.5,390.5 1001.5,385.5 1001.5,376.5 1002.5,372.5 1002.5,366.5 1003.5,364.5 1003.5,360.5 1004.5,358.5 1004.5,356.5 1005.5,355.5 1005.5,352.5 1006.5,351.5 1006.5,348.5 1007.5,347.5 1007.5,345.5 1008.5,344.5 1008.5,343.5 1009.5,342.5 1009.5,341.5 1010.5,340.5 1011.5,339.5 1011.5,338.5 1012.5,338.5 1012.5,337.5 1013.5,336.5 1014.5,335.5 1014.5,334.5 1015.5,334.5 1016.5,333.5 1017.5,333.5 1017.5,332.5 1019.5,332.5 1019.5,331.5 1022.5,331.5 1022.5,330.5 1035.5,330.5 1035.5,331.5 1039.5,331.5 1040.5,332.5 1043.5,332.5 1043.5,333.5 1046.5,333.5 1046.5,334.5 1049.5,334.5 1049.5,335.5 1051.5,335.5 1051.5,336.5 1054.5,336.5 1054.5,337.5 1056.5,337.5 1056.5,338.5 1058.5,338.5 1058.5,339.5 1060.5,339.5 1061.5,340.5 1062.5,340.5 1063.5,341.5 1064.5,341.5 1065.5,342.5 1067.5,342.5 1067.5,343.5 1069.5,343.5 1069.5,344.5 1070.5,344.5 1071.5,345.5 1073.5,345.5 1073.5,346.5 1074.5,346.5 1075.5,347.5 1076.5,347.5 1076.5,348.5 1078.5,348.5 1079.5,349.5 1080.5,349.5 1080.5,350.5 1082.5,350.5 1082.5,351.5 1083.5,351.5 1084.5,352.5 1085.5,352.5 1086.5,353.5 1087.5,353.5 1088.5,354.5 1089.5,354.5 1089.5,355.5 1091.5,355.5 1091.5,356.5 1093.5,356.5 1093.5,357.5 1094.5,357.5 1095.5,358.5 1096.5,358.5 1096.5,359.5 1098.5,359.5 1098.5,360.5 1099.5,360.5 1100.5,361.5 1101.5,361.5 1101.5,362.5 1103.5,362.5 1103.5,363.5 1105.5,363.5 1105.5,364.5 1106.5,364.5 1107.5,365.5 1108.5,365.5 1108.5,366.5 1110.5,366.5 1110.5,367.5 1111.5,367.5 1112.5,368.5 1113.5,368.5 1113.5,369.5 1114.5,369.5 1115.5,370.5 1116.5,370.5 1117.5,371.5 1118.5,371.5 1118.5,372.5 1119.5,372.5 1120.5,373.5 1121.5,373.5 1122.5,374.5 1123.5,374.5 1123.5,375.5 1124.5,375.5 1125.5,376.5 1126.5,376.5 1126.5,377.5 1128.5,377.5 1128.5,378.5 1129.5,378.5 1130.5,379.5 1131.5,379.5 1131.5,380.5 1133.5,380.5 1133.5,381.5 1134.5,381.5 1135.5,382.5 1136.5,382.5 1136.5,383.5 1137.5,383.5 1138.5,384.5 1139.5,384.5 1139.5,385.5 1141.5,385.5 1141.5,386.5 1142.5,386.5 1143.5,387.5 1144.5,387.5 1144.5,388.5 1145.5,388.5 1146.5,389.5 1147.5,389.5 1148.5,390.5 1149.5,390.5 1149.5,391.5 1150.5,391.5 1151.5,392.5 1152.5,392.5 1152.5,393.5 1154.5,393.5 1154.5,394.5 1155.5,394.5 1155.5,395.5 1157.5,395.5 1157.5,396.5 1158.5,396.5 1159.5,397.5 1160.5,397.5 1160.5,398.5 1161.5,398.5 1162.5,399.5 1163.5,399.5 1163.5,400.5 1164.5,400.5 1165.5,401.5 1166.5,401.5 1167.5,402.5 1168.5,402.5 1168.5,403.5 1169.5,403.5 1170.5,404.5 1171.5,404.5 1171.5,405.5 1173.5,405.5 1173.5,406.5 1174.5,406.5 1174.5,407.5 1176.5,407.5 1176.5,408.5 1177.5,408.5 1178.5,409.5 1179.5,409.5 1179.5,410.5 1180.5,410.5 1181.5,411.5 1182.5,411.5 1182.5,412.5 1184.5,412.5 1184.5,413.5 1185.5,413.5 1186.5,414.5 1187.5,414.5 1187.5,415.5 1188.5,415.5 1189.5,416.5 1190.5,416.5 1190.5,417.5 1191.5,417.5 1192.5,418.5 1193.5,418.5 1193.5,419.5 1194.5,419.5 1195.5,420.5 1196.5,420.5 1197.5,421.5 1198.5,421.5 1198.5,422.5 1199.5,422.5 1200.5,423.5 1201.5,423.5 1201.5,424.5 1203.5,424.5 1203.5,425.5 1204.5,425.5 1204.5,426.5 1205.5,426.5 1206.5,427.5 1207.5,427.5 1207.5,428.5 1209.5,428.5 1209.5,429.5 1210.5,429.5 1211.5,430.5 1212.5,430.5 1212.5,431.5 1213.5,431.5 1214.5,432.5 1215.5,432.5 1215.5,433.5 1216.5,433.5 1217.5,434.5" fill="none" stroke="#c01414" stroke-width="1" shape-rendering="crispEdges" stroke-linecap="square"/>
<g font-family="Liberation Sans, sans-serif" font-weight="bold" font-size="13.3px" fill="#a2a2a2">
<text x="45.3" y="144.9" text-anchor="end">0dB</text>
<text x="45.3" y="179.3" text-anchor="end">-9dB</text>
<text x="45.3" y="213.6" text-anchor="end">-18dB</text>
<text x="45.3" y="248.0" text-anchor="end">-27dB</text>
<text x="45.3" y="282.4" text-anchor="end">-36dB</text>
<text x="45.3" y="316.7" text-anchor="end">-45dB</text>
<text x="45.3" y="351.1" text-anchor="end">-54dB</text>
<text x="45.3" y="385.4" text-anchor="end">-63dB</text>
<text x="45.3" y="419.8" text-anchor="end">-72dB</text>
<text x="45.3" y="454.2" text-anchor="end">-81dB</text>
<text x="45.3" y="488.5" text-anchor="end">-90dB</text>
<text x="45.3" y="522.9" text-anchor="end">-99dB</text>
<text x="53.9" y="538.8" text-anchor="middle" font-size="14px">10Hz</text>
<text x="406.2" y="538.8" text-anchor="middle" font-size="14px">100Hz</text>
<text x="758.5" y="538.8" text-anchor="middle" font-size="14px">1KHz</text>
<text x="1110.8" y="538.8" text-anchor="middle" font-size="14px">10KHz</text>
</g>
<g font-family="Liberation Sans, sans-serif" font-weight="bold" font-size="12.7px" text-anchor="middle">
<text x="246.8" y="134.7" fill="#18dc18">V(out1)</text>
<text x="634" y="134.7" fill="#10108c">V(out2)</text>
<text x="1020.5" y="134.7" fill="#c01414">V(out3)</text>
</g>
</svg>
</div></div>
<div class="child" style="top:550px;height:453px">
<div class="ctitle" style="background:linear-gradient(90deg,#0a246a,#a6caf0)"><svg width="16" height="16" viewBox="0 0 16 16" style="left:2px;top:1px"><path d="M2 7.500h3.500M5.500 3v9" stroke="#0000c0" stroke-width="1.600" fill="none"/><path d="M5.500 6l5-5M5.500 9l5.500 5.500" stroke="#0000c0" stroke-width="1.200" fill="none"/><path d="M7.500 13l3.500 .8l-.8-3.500z" fill="#0000c0"/></svg><span class="cap" style="color:#fff">Filter1.asc</span>
<div class="btn" style="left:1216px;top:2px"><svg width="16" height="14" viewBox="0 0 16 14"><rect x="4" y="9" width="6" height="2" fill="#000"/></svg></div><div class="btn" style="left:1232px;top:2px"><svg width="16" height="14" viewBox="0 0 16 14"><rect x="3.5" y="2.500" width="8" height="7" fill="none" stroke="#000"/><rect x="3" y="2" width="9" height="2" fill="#000"/></svg></div><div class="btn" style="left:1250px;top:2px"><svg width="16" height="14" viewBox="0 0 16 14"><path d="M4 3l7 7M11 3l-7 7" stroke="#000" stroke-width="1.600" fill="none"/></svg></div>
</div>
<div class="client" style="height:426px;background:#c5c3c6">
<svg class="sch" width="1248" height="422" viewBox="8 575 1248 422">
<path d="M180.5,631.5 L194.5,631.5 M194.5,631.5 L194.5,955.5 M194.5,631.5 L209.5,631.5 M244.5,631.5 L273.5,631.5 M308.5,631.5 L337.5,631.5 M372.5,631.5 L429.5,631.5 M258.5,631.5 L258.5,673.5 M258.5,702.5 L258.5,716.5 M322.5,631.5 L322.5,673.5 M322.5,702.5 L322.5,716.5 M386.5,631.5 L386.5,673.5 M386.5,702.5 L386.5,716.5 M258.5,716.5 L415.5,716.5 M322.5,659.5 L344.5,659.5 M372.5,659.5 L386.5,659.5 M415.5,631.5 L415.5,666.5 M415.5,702.5 L415.5,723.5 M194.5,759.5 L209.5,759.5 M244.5,759.5 L273.5,759.5 M308.5,759.5 L337.5,759.5 M372.5,759.5 L429.5,759.5 M258.5,759.5 L258.5,801.5 M258.5,830.5 L258.5,844.5 M322.5,759.5 L322.5,801.5 M322.5,830.5 L322.5,844.5 M386.5,759.5 L386.5,801.5 M386.5,830.5 L386.5,844.5 M258.5,844.5 L415.5,844.5 M322.5,787.5 L344.5,787.5 M372.5,787.5 L386.5,787.5 M415.5,759.5 L415.5,794.5 M415.5,830.5 L415.5,851.5 M194.5,886.5 L209.5,886.5 M244.5,886.5 L273.5,886.5 M308.5,886.5 L337.5,886.5 M372.5,886.5 L429.5,886.5 M258.5,886.5 L258.5,929.5 M258.5,957.5 L258.5,972.5 M322.5,886.5 L322.5,929.5 M322.5,957.5 L322.5,972.5 M386.5,886.5 L386.5,929.5 M386.5,957.5 L386.5,972.5 M258.5,972.5 L415.5,972.5 M322.5,915.5 L344.5,915.5 M372.5,915.5 L386.5,915.5 M415.5,886.5 L415.5,922.5 M415.5,957.5 L415.5,979.5 M209.5,631.5 L212.5,631.5 L216.5,623.5 L223.5,638.5 L230.5,623.5 L237.5,638.5 L241.5,631.5 L244.5,631.5 M273.50 631.50 C273.94 627.06 275.69 623.72 279.19 623.72 C283.12 623.72 287.06 627.06 287.50 632.39 C287.72 635.50 286.84 637.06 285.97 637.06 C284.88 637.06 284.22 634.17 284.44 629.72 C284.88 625.28 287.50 623.72 291.00 623.72 C294.50 623.72 297.56 626.17 298.00 632.39 C298.22 635.50 297.34 637.06 296.47 637.06 C295.38 637.06 294.72 634.17 294.94 629.72 C295.38 625.28 298.44 623.72 302.38 623.72 C305.88 623.72 308.06 627.06 308.50 631.50 M337.50 631.50 C337.94 627.06 339.69 623.72 343.19 623.72 C347.12 623.72 351.06 627.06 351.50 632.39 C351.72 635.50 350.84 637.06 349.97 637.06 C348.88 637.06 348.22 634.17 348.44 629.72 C348.88 625.28 351.50 623.72 355.00 623.72 C358.50 623.72 361.56 626.17 362.00 632.39 C362.22 635.50 361.34 637.06 360.47 637.06 C359.38 637.06 358.72 634.17 358.94 629.72 C359.38 625.28 362.44 623.72 366.38 623.72 C369.88 623.72 372.06 627.06 372.50 631.50 M258.5 673.5V686.5 M251.0 686.5H266.0 M251.0 689.5H266.0 M258.5 689.5V702.5 M322.5 673.5V686.5 M315.0 686.5H330.0 M315.0 689.5H330.0 M322.5 689.5V702.5 M386.5 673.5V686.5 M379.0 686.5H394.0 M379.0 689.5H394.0 M386.5 689.5V702.5 M344.5 659.5H356.5 M356.5 652.0V667.0 M360.5 652.0V667.0 M360.5 659.5H372.5 M415.5,666.5 L415.5,670.5 L422.5,673.5 L407.5,681.5 L422.5,688.5 L407.5,695.5 L415.5,698.5 L415.5,702.5 M415.5,723.5 L415.5,730.5 M407.5,730.5 L423.5,730.5 L415.5,738.5 L407.5,730.5 M209.5,759.5 L212.5,759.5 L216.5,751.5 L223.5,766.5 L230.5,751.5 L237.5,766.5 L241.5,759.5 L244.5,759.5 M273.50 759.50 C273.94 755.06 275.69 751.72 279.19 751.72 C283.12 751.72 287.06 755.06 287.50 760.39 C287.72 763.50 286.84 765.06 285.97 765.06 C284.88 765.06 284.22 762.17 284.44 757.72 C284.88 753.28 287.50 751.72 291.00 751.72 C294.50 751.72 297.56 754.17 298.00 760.39 C298.22 763.50 297.34 765.06 296.47 765.06 C295.38 765.06 294.72 762.17 294.94 757.72 C295.38 753.28 298.44 751.72 302.38 751.72 C305.88 751.72 308.06 755.06 308.50 759.50 M337.50 759.50 C337.94 755.06 339.69 751.72 343.19 751.72 C347.12 751.72 351.06 755.06 351.50 760.39 C351.72 763.50 350.84 765.06 349.97 765.06 C348.88 765.06 348.22 762.17 348.44 757.72 C348.88 753.28 351.50 751.72 355.00 751.72 C358.50 751.72 361.56 754.17 362.00 760.39 C362.22 763.50 361.34 765.06 360.47 765.06 C359.38 765.06 358.72 762.17 358.94 757.72 C359.38 753.28 362.44 751.72 366.38 751.72 C369.88 751.72 372.06 755.06 372.50 759.50 M258.5 801.5V814.5 M251.0 814.5H266.0 M251.0 817.5H266.0 M258.5 817.5V830.5 M322.5 801.5V814.5 M315.0 814.5H330.0 M315.0 817.5H330.0 M322.5 817.5V830.5 M386.5 801.5V814.5 M379.0 814.5H394.0 M379.0 817.5H394.0 M386.5 817.5V830.5 M344.5 787.5H356.5 M356.5 780.0V795.0 M360.5 780.0V795.0 M360.5 787.5H372.5 M415.5,794.5 L415.5,798.5 L422.5,801.5 L407.5,808.5 L422.5,815.5 L407.5,822.5 L415.5,826.5 L415.5,830.5 M415.5,851.5 L415.5,858.5 M407.5,858.5 L423.5,858.5 L415.5,866.5 L407.5,858.5 M209.5,886.5 L212.5,886.5 L216.5,879.5 L223.5,894.5 L230.5,879.5 L237.5,894.5 L241.5,886.5 L244.5,886.5 M273.50 886.50 C273.94 882.06 275.69 878.72 279.19 878.72 C283.12 878.72 287.06 882.06 287.50 887.39 C287.72 890.50 286.84 892.06 285.97 892.06 C284.88 892.06 284.22 889.17 284.44 884.72 C284.88 880.28 287.50 878.72 291.00 878.72 C294.50 878.72 297.56 881.17 298.00 887.39 C298.22 890.50 297.34 892.06 296.47 892.06 C295.38 892.06 294.72 889.17 294.94 884.72 C295.38 880.28 298.44 878.72 302.38 878.72 C305.88 878.72 308.06 882.06 308.50 886.50 M337.50 886.50 C337.94 882.06 339.69 878.72 343.19 878.72 C347.12 878.72 351.06 882.06 351.50 887.39 C351.72 890.50 350.84 892.06 349.97 892.06 C348.88 892.06 348.22 889.17 348.44 884.72 C348.88 880.28 351.50 878.72 355.00 878.72 C358.50 878.72 361.56 881.17 362.00 887.39 C362.22 890.50 361.34 892.06 360.47 892.06 C359.38 892.06 358.72 889.17 358.94 884.72 C359.38 880.28 362.44 878.72 366.38 878.72 C369.88 878.72 372.06 882.06 372.50 886.50 M258.5 929.5V941.5 M251.0 941.5H266.0 M251.0 944.5H266.0 M258.5 944.5V957.5 M322.5 929.5V941.5 M315.0 941.5H330.0 M315.0 944.5H330.0 M322.5 944.5V957.5 M386.5 929.5V941.5 M379.0 941.5H394.0 M379.0 944.5H394.0 M386.5 944.5V957.5 M344.5 915.5H356.5 M356.5 908.0V923.0 M360.5 908.0V923.0 M360.5 915.5H372.5 M415.5,922.5 L415.5,925.5 L422.5,929.5 L407.5,936.5 L422.5,943.5 L407.5,950.5 L415.5,954.5 L415.5,957.5 M415.5,979.5 L415.5,986.5 M407.5,986.5 L423.5,986.5 L415.5,994.5 L407.5,986.5 M180.80 967.9 a13.7 13.4 0 1 0 27.4 0 a13.7 13.4 0 1 0 -27.4 0 M190.5 959.5 h8 M194.5 955.5 v8 M190.5 977.5 h8 M194.5 981.3 V987 M186.3 987 h16.4 L194.5 994.6 Z" fill="none" stroke="#b8b8ff" stroke-opacity=".5" stroke-width="3" stroke-linejoin="round"/>
<path d="M180.5,631.5 L194.5,631.5 M194.5,631.5 L194.5,955.5 M194.5,631.5 L209.5,631.5 M244.5,631.5 L273.5,631.5 M308.5,631.5 L337.5,631.5 M372.5,631.5 L429.5,631.5 M258.5,631.5 L258.5,673.5 M258.5,702.5 L258.5,716.5 M322.5,631.5 L322.5,673.5 M322.5,702.5 L322.5,716.5 M386.5,631.5 L386.5,673.5 M386.5,702.5 L386.5,716.5 M258.5,716.5 L415.5,716.5 M322.5,659.5 L344.5,659.5 M372.5,659.5 L386.5,659.5 M415.5,631.5 L415.5,666.5 M415.5,702.5 L415.5,723.5 M194.5,759.5 L209.5,759.5 M244.5,759.5 L273.5,759.5 M308.5,759.5 L337.5,759.5 M372.5,759.5 L429.5,759.5 M258.5,759.5 L258.5,801.5 M258.5,830.5 L258.5,844.5 M322.5,759.5 L322.5,801.5 M322.5,830.5 L322.5,844.5 M386.5,759.5 L386.5,801.5 M386.5,830.5 L386.5,844.5 M258.5,844.5 L415.5,844.5 M322.5,787.5 L344.5,787.5 M372.5,787.5 L386.5,787.5 M415.5,759.5 L415.5,794.5 M415.5,830.5 L415.5,851.5 M194.5,886.5 L209.5,886.5 M244.5,886.5 L273.5,886.5 M308.5,886.5 L337.5,886.5 M372.5,886.5 L429.5,886.5 M258.5,886.5 L258.5,929.5 M258.5,957.5 L258.5,972.5 M322.5,886.5 L322.5,929.5 M322.5,957.5 L322.5,972.5 M386.5,886.5 L386.5,929.5 M386.5,957.5 L386.5,972.5 M258.5,972.5 L415.5,972.5 M322.5,915.5 L344.5,915.5 M372.5,915.5 L386.5,915.5 M415.5,886.5 L415.5,922.5 M415.5,957.5 L415.5,979.5" fill="none" stroke="#0c0ccc" stroke-width="1" shape-rendering="crispEdges"/>
<path d="M209.5,631.5 L212.5,631.5 L216.5,623.5 L223.5,638.5 L230.5,623.5 L237.5,638.5 L241.5,631.5 L244.5,631.5 M273.50 631.50 C273.94 627.06 275.69 623.72 279.19 623.72 C283.12 623.72 287.06 627.06 287.50 632.39 C287.72 635.50 286.84 637.06 285.97 637.06 C284.88 637.06 284.22 634.17 284.44 629.72 C284.88 625.28 287.50 623.72 291.00 623.72 C294.50 623.72 297.56 626.17 298.00 632.39 C298.22 635.50 297.34 637.06 296.47 637.06 C295.38 637.06 294.72 634.17 294.94 629.72 C295.38 625.28 298.44 623.72 302.38 623.72 C305.88 623.72 308.06 627.06 308.50 631.50 M337.50 631.50 C337.94 627.06 339.69 623.72 343.19 623.72 C347.12 623.72 351.06 627.06 351.50 632.39 C351.72 635.50 350.84 637.06 349.97 637.06 C348.88 637.06 348.22 634.17 348.44 629.72 C348.88 625.28 351.50 623.72 355.00 623.72 C358.50 623.72 361.56 626.17 362.00 632.39 C362.22 635.50 361.34 637.06 360.47 637.06 C359.38 637.06 358.72 634.17 358.94 629.72 C359.38 625.28 362.44 623.72 366.38 623.72 C369.88 623.72 372.06 627.06 372.50 631.50 M258.5 673.5V686.5 M251.0 686.5H266.0 M251.0 689.5H266.0 M258.5 689.5V702.5 M322.5 673.5V686.5 M315.0 686.5H330.0 M315.0 689.5H330.0 M322.5 689.5V702.5 M386.5 673.5V686.5 M379.0 686.5H394.0 M379.0 689.5H394.0 M386.5 689.5V702.5 M344.5 659.5H356.5 M356.5 652.0V667.0 M360.5 652.0V667.0 M360.5 659.5H372.5 M415.5,666.5 L415.5,670.5 L422.5,673.5 L407.5,681.5 L422.5,688.5 L407.5,695.5 L415.5,698.5 L415.5,702.5 M415.5,723.5 L415.5,730.5 M407.5,730.5 L423.5,730.5 L415.5,738.5 L407.5,730.5 M209.5,759.5 L212.5,759.5 L216.5,751.5 L223.5,766.5 L230.5,751.5 L237.5,766.5 L241.5,759.5 L244.5,759.5 M273.50 759.50 C273.94 755.06 275.69 751.72 279.19 751.72 C283.12 751.72 287.06 755.06 287.50 760.39 C287.72 763.50 286.84 765.06 285.97 765.06 C284.88 765.06 284.22 762.17 284.44 757.72 C284.88 753.28 287.50 751.72 291.00 751.72 C294.50 751.72 297.56 754.17 298.00 760.39 C298.22 763.50 297.34 765.06 296.47 765.06 C295.38 765.06 294.72 762.17 294.94 757.72 C295.38 753.28 298.44 751.72 302.38 751.72 C305.88 751.72 308.06 755.06 308.50 759.50 M337.50 759.50 C337.94 755.06 339.69 751.72 343.19 751.72 C347.12 751.72 351.06 755.06 351.50 760.39 C351.72 763.50 350.84 765.06 349.97 765.06 C348.88 765.06 348.22 762.17 348.44 757.72 C348.88 753.28 351.50 751.72 355.00 751.72 C358.50 751.72 361.56 754.17 362.00 760.39 C362.22 763.50 361.34 765.06 360.47 765.06 C359.38 765.06 358.72 762.17 358.94 757.72 C359.38 753.28 362.44 751.72 366.38 751.72 C369.88 751.72 372.06 755.06 372.50 759.50 M258.5 801.5V814.5 M251.0 814.5H266.0 M251.0 817.5H266.0 M258.5 817.5V830.5 M322.5 801.5V814.5 M315.0 814.5H330.0 M315.0 817.5H330.0 M322.5 817.5V830.5 M386.5 801.5V814.5 M379.0 814.5H394.0 M379.0 817.5H394.0 M386.5 817.5V830.5 M344.5 787.5H356.5 M356.5 780.0V795.0 M360.5 780.0V795.0 M360.5 787.5H372.5 M415.5,794.5 L415.5,798.5 L422.5,801.5 L407.5,808.5 L422.5,815.5 L407.5,822.5 L415.5,826.5 L415.5,830.5 M415.5,851.5 L415.5,858.5 M407.5,858.5 L423.5,858.5 L415.5,866.5 L407.5,858.5 M209.5,886.5 L212.5,886.5 L216.5,879.5 L223.5,894.5 L230.5,879.5 L237.5,894.5 L241.5,886.5 L244.5,886.5 M273.50 886.50 C273.94 882.06 275.69 878.72 279.19 878.72 C283.12 878.72 287.06 882.06 287.50 887.39 C287.72 890.50 286.84 892.06 285.97 892.06 C284.88 892.06 284.22 889.17 284.44 884.72 C284.88 880.28 287.50 878.72 291.00 878.72 C294.50 878.72 297.56 881.17 298.00 887.39 C298.22 890.50 297.34 892.06 296.47 892.06 C295.38 892.06 294.72 889.17 294.94 884.72 C295.38 880.28 298.44 878.72 302.38 878.72 C305.88 878.72 308.06 882.06 308.50 886.50 M337.50 886.50 C337.94 882.06 339.69 878.72 343.19 878.72 C347.12 878.72 351.06 882.06 351.50 887.39 C351.72 890.50 350.84 892.06 349.97 892.06 C348.88 892.06 348.22 889.17 348.44 884.72 C348.88 880.28 351.50 878.72 355.00 878.72 C358.50 878.72 361.56 881.17 362.00 887.39 C362.22 890.50 361.34 892.06 360.47 892.06 C359.38 892.06 358.72 889.17 358.94 884.72 C359.38 880.28 362.44 878.72 366.38 878.72 C369.88 878.72 372.06 882.06 372.50 886.50 M258.5 929.5V941.5 M251.0 941.5H266.0 M251.0 944.5H266.0 M258.5 944.5V957.5 M322.5 929.5V941.5 M315.0 941.5H330.0 M315.0 944.5H330.0 M322.5 944.5V957.5 M386.5 929.5V941.5 M379.0 941.5H394.0 M379.0 944.5H394.0 M386.5 944.5V957.5 M344.5 915.5H356.5 M356.5 908.0V923.0 M360.5 908.0V923.0 M360.5 915.5H372.5 M415.5,922.5 L415.5,925.5 L422.5,929.5 L407.5,936.5 L422.5,943.5 L407.5,950.5 L415.5,954.5 L415.5,957.5 M415.5,979.5 L415.5,986.5 M407.5,986.5 L423.5,986.5 L415.5,994.5 L407.5,986.5 M180.80 967.9 a13.7 13.4 0 1 0 27.4 0 a13.7 13.4 0 1 0 -27.4 0 M190.5 959.5 h8 M194.5 955.5 v8 M190.5 977.5 h8 M194.5 981.3 V987 M186.3 987 h16.4 L194.5 994.6 Z" fill="none" stroke="#0c0ccc" stroke-width="1" shape-rendering="crispEdges"/>
<g fill="#0000f4" shape-rendering="crispEdges">
<rect x="192" y="629" width="5" height="5"/>
<rect x="256" y="629" width="5" height="5"/>
<rect x="320" y="629" width="5" height="5"/>
<rect x="384" y="629" width="5" height="5"/>
<rect x="412" y="629" width="5" height="5"/>
<rect x="320" y="714" width="5" height="5"/>
<rect x="384" y="714" width="5" height="5"/>
<rect x="412" y="714" width="5" height="5"/>
<rect x="320" y="657" width="5" height="5"/>
<rect x="384" y="657" width="5" height="5"/>
<rect x="192" y="757" width="5" height="5"/>
<rect x="256" y="757" width="5" height="5"/>
<rect x="320" y="757" width="5" height="5"/>
<rect x="384" y="757" width="5" height="5"/>
<rect x="412" y="757" width="5" height="5"/>
<rect x="320" y="842" width="5" height="5"/>
<rect x="384" y="842" width="5" height="5"/>
<rect x="412" y="842" width="5" height="5"/>
<rect x="320" y="785" width="5" height="5"/>
<rect x="384" y="785" width="5" height="5"/>
<rect x="192" y="885" width="5" height="5"/>
<rect x="256" y="885" width="5" height="5"/>
<rect x="320" y="885" width="5" height="5"/>
<rect x="384" y="885" width="5" height="5"/>
<rect x="412" y="885" width="5" height="5"/>
<rect x="320" y="970" width="5" height="5"/>
<rect x="384" y="970" width="5" height="5"/>
<rect x="412" y="970" width="5" height="5"/>
<rect x="320" y="913" width="5" height="5"/>
<rect x="384" y="913" width="5" height="5"/>
</g>
<g font-family="Liberation Sans, sans-serif" fill="#000" stroke="#000" stroke-width=".22">
<text x="179.6" y="634.6" font-size="8.64px" text-anchor="end" textLength="9.2" lengthAdjust="spacing">IN</text>
<text x="224.3" y="609.2" font-size="9.60px" text-anchor="middle" textLength="13.2" lengthAdjust="spacing">R2</text>
<text x="223.6" y="618.9" font-size="9.60px" text-anchor="middle" textLength="19.2" lengthAdjust="spacing">1K5</text>
<text x="289.5" y="605.0" font-size="9.60px" text-anchor="middle" textLength="12.2" lengthAdjust="spacing">L1</text>
<text x="289.5" y="617.7" font-size="9.60px" text-anchor="middle" textLength="33.2" lengthAdjust="spacing">130mH</text>
<text x="353.5" y="605.0" font-size="9.60px" text-anchor="middle" textLength="12.2" lengthAdjust="spacing">L2</text>
<text x="353.5" y="617.7" font-size="9.60px" text-anchor="middle" textLength="33.2" lengthAdjust="spacing">130mH</text>
<text x="262.3" y="680.5" font-size="9.60px" textLength="13.2" lengthAdjust="spacing">C1</text>
<text x="261.6" y="701.5" font-size="9.60px" textLength="18.2" lengthAdjust="spacing">22n</text>
<text x="326.6" y="680.5" font-size="9.60px" textLength="13.2" lengthAdjust="spacing">C2</text>
<text x="325.8" y="701.5" font-size="9.60px" textLength="18.2" lengthAdjust="spacing">47n</text>
<text x="390.6" y="680.5" font-size="9.60px" textLength="13.2" lengthAdjust="spacing">C3</text>
<text x="389.8" y="701.5" font-size="9.60px" textLength="18.2" lengthAdjust="spacing">22n</text>
<text x="357.5" y="649.5" font-size="9.60px" text-anchor="middle" textLength="13.2" lengthAdjust="spacing">C4</text>
<text x="357.8" y="675.7" font-size="9.60px" text-anchor="middle" textLength="18.2" lengthAdjust="spacing">7n5</text>
<text x="423.6" y="680.5" font-size="9.60px" textLength="13.2" lengthAdjust="spacing">R1</text>
<text x="423.0" y="697.0" font-size="9.60px" textLength="19.2" lengthAdjust="spacing">2K2</text>
<text x="429.8" y="634.7" font-size="8.64px" textLength="23.2" lengthAdjust="spacing">OUT1</text>
<text x="224.3" y="737.2" font-size="9.60px" text-anchor="middle" textLength="13.2" lengthAdjust="spacing">R4</text>
<text x="223.6" y="746.9" font-size="9.60px" text-anchor="middle" textLength="19.2" lengthAdjust="spacing">1K5</text>
<text x="289.5" y="733.0" font-size="9.60px" text-anchor="middle" textLength="12.2" lengthAdjust="spacing">L3</text>
<text x="289.5" y="745.7" font-size="9.60px" text-anchor="middle" textLength="33.2" lengthAdjust="spacing">450mH</text>
<text x="353.5" y="733.0" font-size="9.60px" text-anchor="middle" textLength="12.2" lengthAdjust="spacing">L4</text>
<text x="353.5" y="745.7" font-size="9.60px" text-anchor="middle" textLength="33.2" lengthAdjust="spacing">450mH</text>
<text x="262.3" y="808.5" font-size="9.60px" textLength="13.2" lengthAdjust="spacing">C5</text>
<text x="261.6" y="829.5" font-size="9.60px" textLength="18.2" lengthAdjust="spacing">4n7</text>
<text x="326.6" y="808.5" font-size="9.60px" textLength="13.2" lengthAdjust="spacing">C6</text>
<text x="325.8" y="829.5" font-size="9.60px" textLength="18.2" lengthAdjust="spacing">10n</text>
<text x="390.6" y="808.5" font-size="9.60px" textLength="13.2" lengthAdjust="spacing">C7</text>
<text x="389.8" y="829.5" font-size="9.60px" textLength="18.2" lengthAdjust="spacing">4n7</text>
<text x="357.5" y="777.5" font-size="9.60px" text-anchor="middle" textLength="13.2" lengthAdjust="spacing">C8</text>
<text x="357.8" y="803.7" font-size="9.60px" text-anchor="middle" textLength="18.2" lengthAdjust="spacing">1n5</text>
<text x="423.6" y="808.5" font-size="9.60px" textLength="13.2" lengthAdjust="spacing">R3</text>
<text x="423.0" y="825.0" font-size="9.60px" textLength="19.2" lengthAdjust="spacing">2K2</text>
<text x="429.8" y="762.7" font-size="8.64px" textLength="23.2" lengthAdjust="spacing">OUT2</text>
<text x="224.3" y="864.2" font-size="9.60px" text-anchor="middle" textLength="13.2" lengthAdjust="spacing">R6</text>
<text x="223.6" y="873.9" font-size="9.60px" text-anchor="middle" textLength="19.2" lengthAdjust="spacing">1K5</text>
<text x="289.5" y="860.0" font-size="9.60px" text-anchor="middle" textLength="12.2" lengthAdjust="spacing">L5</text>
<text x="289.5" y="872.7" font-size="9.60px" text-anchor="middle" textLength="27.2" lengthAdjust="spacing">50mH</text>
<text x="353.5" y="860.0" font-size="9.60px" text-anchor="middle" textLength="12.2" lengthAdjust="spacing">L6</text>
<text x="353.5" y="872.7" font-size="9.60px" text-anchor="middle" textLength="27.2" lengthAdjust="spacing">50mH</text>
<text x="262.3" y="935.5" font-size="9.60px" textLength="13.2" lengthAdjust="spacing">C9</text>
<text x="261.6" y="956.5" font-size="9.60px" textLength="18.2" lengthAdjust="spacing">68n</text>
<text x="326.6" y="935.5" font-size="9.60px" textLength="19.2" lengthAdjust="spacing">C10</text>
<text x="325.8" y="956.5" font-size="9.60px" textLength="24.2" lengthAdjust="spacing">150n</text>
<text x="390.6" y="935.5" font-size="9.60px" textLength="19.2" lengthAdjust="spacing">C11</text>
<text x="389.8" y="956.5" font-size="9.60px" textLength="18.2" lengthAdjust="spacing">68n</text>
<text x="357.5" y="904.5" font-size="9.60px" text-anchor="middle" textLength="19.2" lengthAdjust="spacing">C12</text>
<text x="357.8" y="930.7" font-size="9.60px" text-anchor="middle" textLength="18.2" lengthAdjust="spacing">22n</text>
<text x="423.6" y="935.5" font-size="9.60px" textLength="13.2" lengthAdjust="spacing">R5</text>
<text x="423.0" y="952.0" font-size="9.60px" textLength="19.2" lengthAdjust="spacing">2K2</text>
<text x="429.8" y="889.7" font-size="8.64px" textLength="23.2" lengthAdjust="spacing">OUT3</text>
<text x="205.3" y="953.5" font-size="9.60px" textLength="13.2" lengthAdjust="spacing">V1</text>
<text x="215.5" y="974.6" font-size="9.60px" textLength="23.2" lengthAdjust="spacing">AC 1</text>
<text x="210.8" y="986.6" font-size="9.60px" textLength="72.2" lengthAdjust="spacing">SINE(0 1 1000)</text>
<text x="227.2" y="584.8" font-size="9.60px" textLength="44.2" lengthAdjust="spacing">;tran 10m</text>
<text x="223.6" y="595.7" font-size="9.60px" textLength="109.2" lengthAdjust="spacing">.ac dec 1000 10 20000</text>
</g></svg>
<div style="left:1250px;top:2px;width:16px;height:422px;background:repeating-conic-gradient(#fff 0 25%,#d4d0c8 0 50%) 0 0/2px 2px"></div>
<div class="sbtn" style="left:1250px;top:2px"><svg width="16" height="16" viewBox="0 0 16 16"><path d="M4 9.500h7l-3.500-3.500z" fill="#000"/></svg></div>
<div class="sbtn" style="left:1250px;top:48px;height:360px"></div>
<div class="sbtn" style="left:1250px;top:408px"><svg width="16" height="16" viewBox="0 0 16 16"><path d="M4 6.500h7l-3.500 3.500z" fill="#000"/></svg></div>
</div></div>
<div id="status"><div class="hl" style="left:0;top:1px;width:1280px;height:1px"></div><div style="left:1229px;top:4px;width:51px;height:17px;box-shadow:inset 1px 1px 0 #808080,inset -1px -1px 0 #fff"></div></div>
</body></html>
